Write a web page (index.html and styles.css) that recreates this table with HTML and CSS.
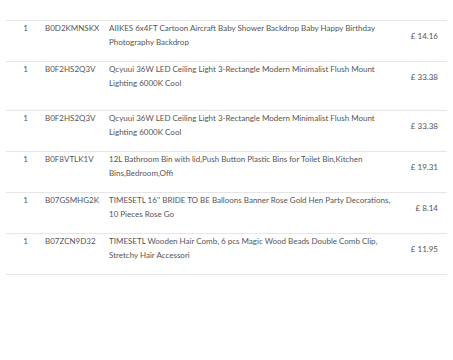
FILE: index.html
```html
<!DOCTYPE html>
<html>
<head>
<meta charset="utf-8">
<link rel="stylesheet" href="styles.css">
</head>
<body>
<div class="orders">
  <div class="row">
    <div class="qty">1</div>
    <div class="asin">B0D2KMNSKX</div>
    <div class="desc">AIIKES 6x4FT Cartoon Aircraft Baby Shower Backdrop Baby Happy Birthday Photography Backdrop</div>
    <div class="price">£ 14.16</div>
  </div>
  <div class="row row-tall">
    <div class="qty">1</div>
    <div class="asin">B0F2HS2Q3V</div>
    <div class="desc">Qcyuui 36W LED Ceiling Light 3-Rectangle Modern Minimalist Flush Mount Lighting 6000K Cool</div>
    <div class="price">£ 33.38</div>
  </div>
  <div class="row">
    <div class="qty">1</div>
    <div class="asin">B0F2HS2Q3V</div>
    <div class="desc">Qcyuui 36W LED Ceiling Light 3-Rectangle Modern Minimalist Flush Mount Lighting 6000K Cool</div>
    <div class="price">£ 33.38</div>
  </div>
  <div class="row">
    <div class="qty">1</div>
    <div class="asin">B0F8VTLK1V</div>
    <div class="desc">12L Bathroom Bin with lid,Push Button Plastic Bins for Toilet Bin,Kitchen Bins,Bedroom,Offi</div>
    <div class="price">£ 19.31</div>
  </div>
  <div class="row">
    <div class="qty">1</div>
    <div class="asin">B07GSMHG2K</div>
    <div class="desc">TIMESETL 16'' BRIDE TO BE Balloons Banner Rose Gold Hen Party Decorations, 10 Pieces Rose Go</div>
    <div class="price">£ 8.14</div>
  </div>
  <div class="row">
    <div class="qty">1</div>
    <div class="asin">B07ZCN9D32</div>
    <div class="desc">TIMESETL Wooden Hair Comb, 6 pcs Magic Wood Beads Double Comb Clip, Stretchy Hair Accessori</div>
    <div class="price">£ 11.95</div>
  </div>
</div>
</body>
</html>
```
FILE: styles.css
```css
html, body {
  margin: 0;
  padding: 0;
  background: #ffffff;
}
body {
  font-family: Lato, "Liberation Sans", sans-serif;
  font-size: 8px;
  line-height: 13.5px;
  color: #555555;
}
.orders {
  margin: 20px 6px 0 6px;
  border-bottom: 1px solid #e6e6e6;
}
.row {
  display: grid;
  grid-template-columns: 39px 64px 289px 1fr;
  align-items: start;
  border-top: 1px solid #e6e6e6;
  height: 40px;
  box-sizing: content-box;
}
.row-tall {
  height: 48px;
}
.qty {
  padding-top: 1px;
  text-align: center;
}
.asin,
.desc {
  padding-top: 1px;
}
.price {
  padding-top: 9px;
  padding-right: 9px;
  text-align: right;
}
```
